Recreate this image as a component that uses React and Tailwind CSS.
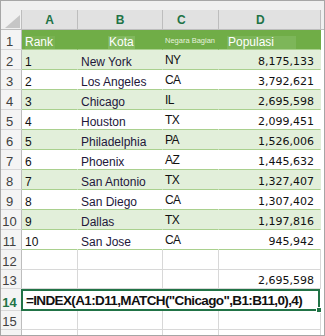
const ROWS = [
  ["1", "New York", "NY", "8,175,133"],
  ["2", "Los Angeles", "CA", "3,792,621"],
  ["3", "Chicago", "IL", "2,695,598"],
  ["4", "Houston", "TX", "2,099,451"],
  ["5", "Philadelphia", "PA", "1,526,006"],
  ["6", "Phoenix", "AZ", "1,445,632"],
  ["7", "San Antonio", "TX", "1,327,407"],
  ["8", "San Diego", "CA", "1,307,402"],
  ["9", "Dallas", "TX", "1,197,816"],
  ["10", "San Jose", "CA", "945,942"],
];

function RowHead({ n, active }) {
  return (
    <div
      className={`w-[21px] shrink-0 flex items-end justify-center pr-[3px] bg-[#f4f4f4] border-r border-b border-r-[#bdbdbd] border-b-[#d8d8d8] text-[13px] leading-[15px] ${active ? "text-[#217346] font-bold" : "text-[#404040]"}`}
    >
      {n}
    </div>
  );
}

function BlankRow({ n, h }) {
  return (
    <div className={`flex ${h}`}>
      <RowHead n={n} />
      <div className="w-[56px] border-r border-b border-[#d8d8d8]" />
      <div className="w-[85px] border-r border-b border-[#d8d8d8]" />
      <div className="w-[56px] border-r border-b border-[#d8d8d8]" />
      <div className="w-[102px] border-r border-b border-[#d8d8d8]" />
      <div className="flex-1" />
    </div>
  );
}

export default function App() {
  return (
    <div className="w-[325px] h-[336px] bg-white border border-[#a6a6a6] flex flex-col overflow-hidden font-['Liberation_Sans',Arial,sans-serif]">
      <div className="h-[9px] shrink-0 bg-[#f0f0f0]" />

      {/* column letters */}
      <div className="flex h-[20px] shrink-0">
        <div className="w-[21px] bg-[#f0f0f0] border-r border-b border-[#bdbdbd] flex items-end justify-end pr-[1px] pb-[1px]">
          <svg width="15" height="13" viewBox="0 0 15 13">
            <polygon points="15,0 15,13 0,13" fill="#c6c6c6" />
          </svg>
        </div>
        <div className="w-[56px] bg-[#e1e1e1] border-r border-b border-[#bdbdbd] flex items-center justify-center text-[#217346] font-bold text-[12px]">A</div>
        <div className="w-[85px] bg-[#e1e1e1] border-r border-b border-[#bdbdbd] flex items-center justify-center text-[#217346] font-bold text-[12px]">B</div>
        <div className="w-[56px] bg-[#e1e1e1] border-r border-b border-[#bdbdbd] flex items-center pl-[14px] text-[#217346] font-bold text-[12px]">C</div>
        <div className="w-[102px] bg-[#e1e1e1] border-r border-b border-[#bdbdbd] flex items-center pl-[37px] text-[#217346] font-bold text-[12px]">D</div>
        <div className="flex-1 bg-[#f0f0f0] border-b border-[#bdbdbd]" />
      </div>

      {/* table header row */}
      <div className="flex h-[20px] shrink-0">
        <RowHead n="1" />
        <div className="w-[56px] bg-[#70ad47] border-r border-b border-r-transparent border-b-[#a9d08e] flex items-end pl-[3px] text-white text-[12px] leading-[13px]">
          <span className="bg-[#79b252] pr-[2px]">Rank</span>
        </div>
        <div className="w-[85px] bg-[#70ad47] border-r border-b border-r-transparent border-b-[#a9d08e] flex items-end pl-[30px] text-white text-[12px] leading-[13px]">
          <span className="bg-[#82b95e] px-[1px]">Kota</span>
        </div>
        <div className="w-[56px] bg-[#70ad47] border-r border-b border-r-transparent border-b-[#a9d08e] flex items-end pl-[2px] pb-[4px] text-[#e6f2dc] text-[7.5px] leading-[9px] whitespace-nowrap overflow-hidden">
          Negara Bagian
        </div>
        <div className="w-[102px] bg-[#70ad47] border-r border-b border-r-transparent border-b-[#a9d08e] flex items-end pl-[8px] text-white text-[12px] leading-[13px]">
          <span className="bg-[#7db659] pl-[1px] pr-[22px]">Populasi</span>
        </div>
        <div className="flex-1" />
      </div>

      {/* data rows */}
      {ROWS.map((r, i) => {
        const bg = i % 2 === 0 ? "bg-[#e2efda]" : "bg-white";
        const cell = `${bg} border-r border-b border-r-transparent border-b-[#a9d08e] flex items-end`;
        return (
          <div key={r[0]} className="flex h-[20px] shrink-0">
            <RowHead n={String(i + 2)} />
            <div className={`w-[56px] ${cell} pl-[3px] text-[12px] leading-[14px] text-[#111]`}>{r[0]}</div>
            <div className={`w-[85px] ${cell} pl-[3px] text-[12px] leading-[13px] text-[#22173a] whitespace-nowrap`}>{r[1]}</div>
            <div className={`w-[56px] ${cell} pl-[2px] pb-[2px] text-[12px] leading-[14px] tracking-[-0.6px] text-[#111]`}>{r[2]}</div>
            <div className={`w-[102px] ${cell} justify-end pr-[6px] font-['DejaVu_Sans',sans-serif] text-[11px] leading-[14px] text-[#111]`}>{r[3]}</div>
            <div className="flex-1" />
          </div>
        );
      })}

      <BlankRow n="12" h="h-[20px] shrink-0" />

      <div className="flex h-[19px] shrink-0">
        <RowHead n="13" />
        <div className="w-[56px] border-r border-b border-[#d8d8d8]" />
        <div className="w-[85px] border-r border-b border-[#d8d8d8]" />
        <div className="w-[56px] border-r border-b border-[#d8d8d8]" />
        <div className="w-[102px] border-r border-b border-[#d8d8d8] flex items-end justify-end pr-[6px] font-['DejaVu_Sans',sans-serif] text-[11px] leading-[14px] text-[#111]">
          2,695,598
        </div>
        <div className="flex-1" />
      </div>

      {/* active merged cell */}
      <div className="flex h-[22px] shrink-0">
        <RowHead n="14" active />
        <div className="relative -ml-[1px] w-[299px] border-2 border-[#217346] flex items-center pl-[3px] font-bold text-[13.5px] leading-[15px] tracking-[-0.63px] text-[#111] whitespace-nowrap">
          =INDEX(A1:D11,MATCH("Chicago",B1:B11,0),4)
          <div className="absolute -right-[4px] -bottom-[4px] w-[6px] h-[6px] bg-[#217346] border border-white" />
        </div>
        <div className="flex-1" />
      </div>

      <BlankRow n="15" h="h-[19px] shrink-0" />

      <div className="flex flex-1">
        <div className="w-[21px] bg-[#f4f4f4] border-r border-[#bdbdbd]" />
        <div className="w-[56px] border-r border-[#d8d8d8]" />
        <div className="w-[85px] border-r border-[#d8d8d8]" />
        <div className="w-[56px] border-r border-[#d8d8d8]" />
        <div className="w-[102px] border-r border-[#d8d8d8]" />
        <div className="flex-1" />
      </div>
    </div>
  );
}
